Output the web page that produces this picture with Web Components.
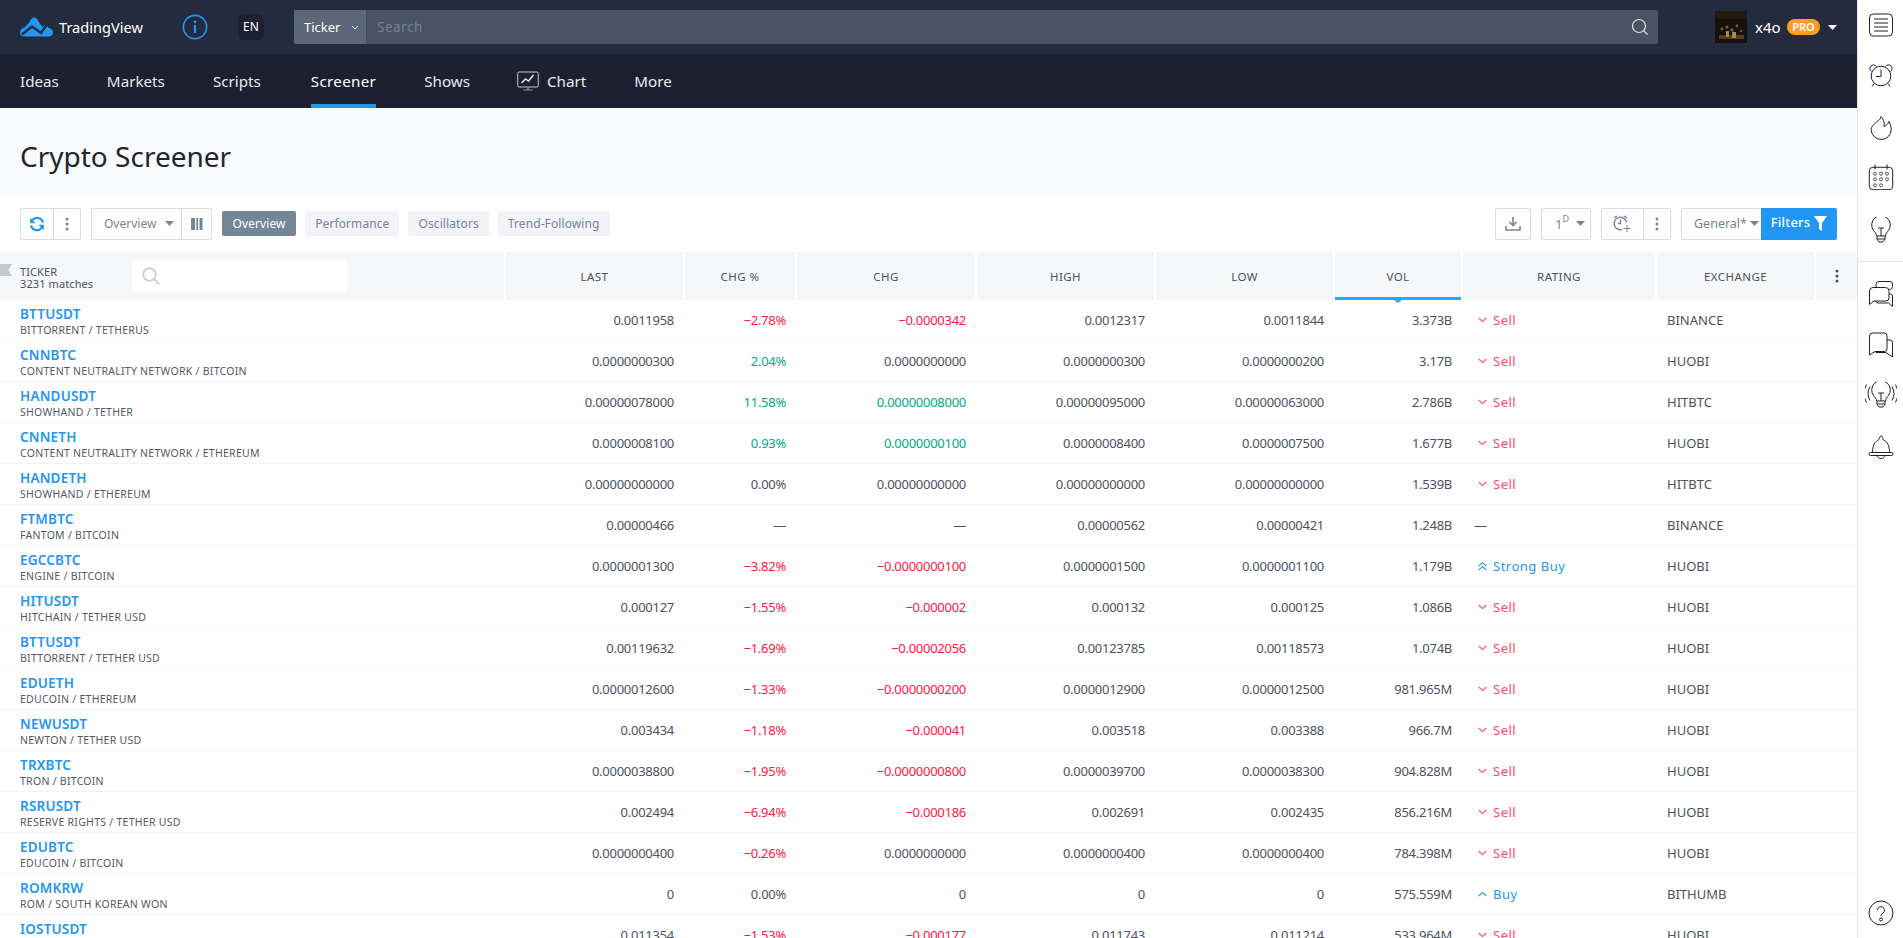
<!DOCTYPE html>
<html><head><meta charset="utf-8"><title>Crypto Screener</title>
<style>
html,body{margin:0;height:100%;overflow:hidden;background:#fff}
body{display:flex;font-family:"Noto Sans","Liberation Sans",sans-serif;font-size:13px;color:#4c525e}
tv-main{flex:1;min-width:0}
</style></head><body>
<tv-main>
  <tv-topbar></tv-topbar>
  <tv-nav></tv-nav>
  <tv-pagehead>Crypto Screener</tv-pagehead>
  <tv-toolbar></tv-toolbar>
  <tv-table></tv-table>
</tv-main>
<tv-sidebar></tv-sidebar>
<script>
function def(name,html,setup){
  customElements.define(name,class extends HTMLElement{
    constructor(){super();this.attachShadow({mode:'open'}).innerHTML=html;if(setup)setup(this.shadowRoot,this)}
  });
}
def('tv-main','<style>:host{display:block;height:100vh;overflow:hidden}</style><slot></slot>');
def('tv-topbar',`<style>
:host{display:flex;align-items:center;height:54px;background:#252b3e;color:#fff;box-sizing:border-box;padding-left:20px}
.logo{display:flex;align-items:center;gap:6px;width:142px;font-size:14.6px}
.info{width:26px;height:26px;margin:0 0 0 20px}
.lang{margin-left:30px;width:26px;height:26px;border-radius:5px;background:#1c2030;display:flex;align-items:center;justify-content:center;font-size:12px;box-sizing:border-box;padding-bottom:2px}
.search{margin-left:30px;width:1364px;height:34px;display:flex;border-radius:2px;overflow:hidden;background:#4a5364}
.ticker{width:73px;background:#5b6676;border-right:1px solid #424b5b;box-sizing:border-box;display:flex;align-items:center;padding-left:10px;font-size:13px;gap:11px}
.q{flex:1;display:flex;align-items:center;padding-left:10px;color:#78818f;font-size:13.5px;letter-spacing:.5px}
.mag{margin-right:9px;align-self:center}
.user{display:flex;align-items:center;margin-left:57px}
.ava{width:32px;height:32px;background:#15110c;overflow:hidden}
.name{margin-left:8px;font-size:15px;width:32px}
.pro{width:33px;height:16px;border-radius:8px;background:#ff9c27;font-size:11px;font-weight:600;text-align:center;line-height:16px}
.car{margin-left:8px}
</style>
<div class="logo"><svg width="33" height="20" viewBox="0 0 33 20"><path d="M0 15.500C0 12 3 10.500 5 10.500C6 8.500 7.500 7 9 6C10 3 12 .5 14 .5C16 .5 17.500 2.500 18.500 4.500C20 6.500 21 8.500 22.500 10C24 7.500 27 8 28 10.500C31 11 33 13 33 15.500C33 18 31 19.500 29 19.500L4 19.500C2 19.500 0 18 0 15.500Z" fill="#2196f3"/><path d="M2 17.500L12 9.500L21 16L26.500 8" fill="none" stroke="#252b3e" stroke-width="2.400"/></svg><span>TradingView</span></div>
<svg class="info" viewBox="0 0 26 26"><circle cx="13" cy="13" r="11.600" fill="none" stroke="#2196f3" stroke-width="1.600"/><rect x="11.900" y="11" width="2.200" height="8" fill="#2196f3"/><circle cx="13" cy="8" r="1.400" fill="#2196f3"/></svg>
<div class="lang">EN</div>
<div class="search"><div class="ticker"><span>Ticker</span><svg width="8" height="5" viewBox="0 0 8 5"><path d="M1 1l3 3 3-3" fill="none" stroke="#dfe3e8" stroke-width="1"/></svg></div>
<div class="q">Search</div>
<svg class="mag" width="18" height="18" viewBox="0 0 18 18"><circle cx="8" cy="8" r="6.500" fill="none" stroke="#dfe3e8" stroke-width="1.200"/><path d="M12.800 12.800L16.500 16.500" stroke="#dfe3e8" stroke-width="1.200"/></svg></div>
<div class="user"><svg class="ava" viewBox="0 0 32 32"><rect width="32" height="32" fill="#15110c"/><path d="M0 0h32v8H0z" fill="#221a10"/><g fill="#7a5a2c"><circle cx="7" cy="18" r="1.400"/><circle cx="12" cy="16" r="1.600"/><circle cx="17" cy="19" r="1.800"/><circle cx="22" cy="15" r="1.400"/><circle cx="26" cy="20" r="1.300"/></g><path d="M4 24h25v4H4z" fill="#5b3a1a"/><path d="M11 20h3v6h-3zM17 21h4v6h-4z" fill="#a88a50"/></svg>
<span class="name">x4o</span><span class="pro">PRO</span><svg class="car" width="9" height="5" viewBox="0 0 9 5"><path d="M0 0h9L4.500 5z" fill="#fff"/></svg></div>`);
def('tv-nav',`<style>
:host{display:flex;height:54px;background:#1c2030;color:#e8eaef;font-size:15.200px;padding-left:20px;gap:48px}
a{display:flex;align-items:center;gap:8px;height:54px;box-sizing:border-box}
.on{border-bottom:4px solid #2196f3;padding-top:4px;color:#fff;margin-left:2px;letter-spacing:.3px}
.c{margin-left:-1px}
</style><a>Ideas</a><a>Markets</a><a>Scripts</a><a class="on">Screener</a><a>Shows</a>
<a class="c"><svg width="22" height="20" viewBox="0 0 22 20"><rect x=".7" y="1" width="20.600" height="15" rx="1.500" fill="none" stroke="#c4c8d0" stroke-width="1"/><path d="M4.500 12l4-4 3 2 5-6" fill="none" stroke="#eceef2" stroke-width="1.400"/><path d="M11 16v2.500M6.500 19h9" stroke="#9aa0ab" stroke-width="1.200"/></svg>Chart</a><a>More</a>`);
def('tv-pagehead',`<style>:host{display:block;height:87px;background:#f9fafb;box-sizing:border-box;padding:25px 0 0 20px;font-size:28px;line-height:46px;color:#1f2430}</style><slot></slot>`);
const dots='<svg width="4" height="14" viewBox="0 0 4 14"><circle cx="2" cy="2" r="1.500"/><circle cx="2" cy="7" r="1.500"/><circle cx="2" cy="12" r="1.500"/></svg>';
const caret='<svg width="9" height="5" viewBox="0 0 9 5"><path d="M0 0h9L4.500 5z"/></svg>';
def('tv-toolbar',`<style>
:host{display:flex;align-items:center;height:57px;box-sizing:border-box;padding:0 20px;font-size:12px;color:#758696;fill:#758696}
.g{display:flex;height:32px;border:1px solid #dadde0;border-radius:2px;box-sizing:border-box;align-items:center}
.g>*{display:flex;align-items:center;justify-content:center;height:100%;box-sizing:border-box}
.g>*+*{border-left:1px solid #dadde0}
.tab{height:25px;display:flex;align-items:center;padding:0 10px;background:#f1f3f6;border-radius:2px;box-sizing:border-box;margin-left:9px;font-size:12px;letter-spacing:.1px}
.tab.on{background:#758696;color:#fff;margin-left:10px;padding:0 10.500px}
.sp{flex:1}
.f{background:#2196f3;color:#fff;fill:#fff;height:32px;width:76px;display:flex;align-items:center;justify-content:center;gap:4px;font-size:13px;font-weight:500;border-radius:0 2px 2px 0;letter-spacing:.2px}
.f span{margin-top:-3px}
sup{font-size:9px;line-height:0;position:relative;top:-1px;vertical-align:super}
.l{justify-content:flex-start!important;padding-left:12px}
</style>
<div class="g" style="width:61px"><div style="width:32px"><svg width="16" height="16" viewBox="0 0 16 16" fill="none" stroke="#2196f3" stroke-width="2.200"><path d="M14 6.500A6 6 0 0 0 3.400 4.200L2 6"/><path d="M2 9.500a6 6 0 0 0 10.600 2.300L14 10"/><path d="M1.200 2v5.300h5.300M14.800 14V8.700H9.500" stroke-width="0" fill="#2196f3"/></svg></div><div style="flex:1">${dots}</div></div>
<div class="g" style="width:121px;margin-left:10px"><div class="l" style="width:89px;gap:9px">Overview ${caret}</div><div style="flex:1"><svg width="12" height="12" viewBox="0 0 12 12"><path d="M0 0h4v12H0zM5.300 0h1.700v12H5.300zM8.500 0h3v12h-3z"/></svg></div></div>
<div class="tab on">Overview</div><div class="tab">Performance</div><div class="tab">Oscillators</div><div class="tab">Trend-Following</div>
<div class="sp"></div>
<div class="g" style="width:36px"><div style="flex:1"><svg width="16" height="14" viewBox="0 0 16 14" fill="none" stroke="#758696" stroke-width="1.600"><path d="M8 0v8M4.500 5L8 8.500 11.500 5M1 9v4h14V9"/></svg></div></div>
<div class="g" style="width:50px;margin-left:10px"><div class="l" style="flex:1;gap:7px;font-size:13px;padding-left:13px"><span>1<sup>D</sup></span>${caret}</div></div>
<div class="g" style="width:70px;margin-left:10px"><div style="width:41px"><svg width="19" height="18" viewBox="0 0 19 18" fill="none" stroke="#758696" stroke-width="1.400"><path d="M13.500 7.500A6.200 6.200 0 1 0 9 14.500"/><path d="M7.500 4.500v4H5M1 3l3-2M11 1l3 2"/><path d="M14 10v7M10.500 13.500h7" stroke-width="1"/></svg></div><div style="flex:1">${dots}</div></div>
<div class="g" style="width:80px;margin-left:10px;border-right:0;border-radius:2px 0 0 2px"><div class="l" style="flex:1;gap:3px;font-size:12.500px">General*${caret}</div></div>
<div class="f"><span>Filters</span><svg width="13" height="15" viewBox="0 0 13 15"><path d="M0 0h13L8 7v8l-3-2V7z"/></svg></div>`);

const rows=[
['BTTUSDT','BITTORRENT / TETHERUS','0.0011958','−2.78%','−0.0000342','0.0012317','0.0011844','3.373B','s','BINANCE','r'],
['CNNBTC','CONTENT NEUTRALITY NETWORK / BITCOIN','0.0000000300','2.04%','0.0000000000','0.0000000300','0.0000000200','3.17B','s','HUOBI','gn'],
['HANDUSDT','SHOWHAND / TETHER','0.00000078000','11.58%','0.00000008000','0.00000095000','0.00000063000','2.786B','s','HITBTC','g'],
['CNNETH','CONTENT NEUTRALITY NETWORK / ETHEREUM','0.0000008100','0.93%','0.0000000100','0.0000008400','0.0000007500','1.677B','s','HUOBI','g'],
['HANDETH','SHOWHAND / ETHEREUM','0.00000000000','0.00%','0.00000000000','0.00000000000','0.00000000000','1.539B','s','HITBTC','n'],
['FTMBTC','FANTOM / BITCOIN','0.00000466','—','—','0.00000562','0.00000421','1.248B','d','BINANCE','n'],
['EGCCBTC','ENGINE / BITCOIN','0.0000001300','−3.82%','−0.0000000100','0.0000001500','0.0000001100','1.179B','sb','HUOBI','r'],
['HITUSDT','HITCHAIN / TETHER USD','0.000127','−1.55%','−0.000002','0.000132','0.000125','1.086B','s','HUOBI','r'],
['BTTUSDT','BITTORRENT / TETHER USD','0.00119632','−1.69%','−0.00002056','0.00123785','0.00118573','1.074B','s','HUOBI','r'],
['EDUETH','EDUCOIN / ETHEREUM','0.0000012600','−1.33%','−0.0000000200','0.0000012900','0.0000012500','981.965M','s','HUOBI','r'],
['NEWUSDT','NEWTON / TETHER USD','0.003434','−1.18%','−0.000041','0.003518','0.003388','966.7M','s','HUOBI','r'],
['TRXBTC','TRON / BITCOIN','0.0000038800','−1.95%','−0.0000000800','0.0000039700','0.0000038300','904.828M','s','HUOBI','r'],
['RSRUSDT','RESERVE RIGHTS / TETHER USD','0.002494','−6.94%','−0.000186','0.002691','0.002435','856.216M','s','HUOBI','r'],
['EDUBTC','EDUCOIN / BITCOIN','0.0000000400','−0.26%','0.0000000000','0.0000000400','0.0000000400','784.398M','s','HUOBI','rn'],
['ROMKRW','ROM / SOUTH KOREAN WON','0','0.00%','0','0','0','575.559M','b','BITHUMB','n'],
['IOSTUSDT','','0.011354','−1.53%','−0.000177','0.011743','0.011214','533.964M','s','HUOBI','r'],
];
const COLS='506px 179px 112px 180px 179px 179px 128px 194px 159px 41px';
def('tv-th',`<style>
:host{display:flex;align-items:center;justify-content:center;background:#f6f7f9;margin-right:2px;font-size:11.500px;letter-spacing:.45px;color:#4c525e;position:relative;box-sizing:border-box}
:host([sel]){border-bottom:3px solid #36a3f0;padding-top:3px}
:host(:last-child){margin-right:0}
.tip{display:none;position:absolute;bottom:-6px;left:50%;margin-left:-4px;width:0;height:0;border:4px solid transparent;border-bottom:0;border-top:3px solid #36a3f0}
:host([sel]) .tip{display:block}
</style><slot></slot><i class="tip"></i>`);
def('tv-row',`<style>
:host{display:grid;grid-template-columns:${COLS};height:41px;box-sizing:border-box;border-bottom:1px solid #f1f3fa;align-items:center;font-size:13px;color:#4c525e}
.t{padding-left:20px;line-height:14px;margin-top:4px}
.sym{color:#2196f3;font-weight:600;font-size:13.500px;line-height:17px;letter-spacing:.2px}
.sub{font-size:10.500px;line-height:15px;height:15px;color:#535965;letter-spacing:.27px}
.n{text-align:right;padding-right:11px;letter-spacing:-.27px}
.r{color:#ff1744}.g{color:#00a97f}
.rat{display:flex;align-items:center;gap:6px;padding-left:15px;letter-spacing:.5px}
.s{color:#ff4a68}.b{color:#2196f3}
.ex{padding-left:10px}
</style><div class="t"><div class="sym"></div><div class="sub"></div></div>
<div class="n c2"></div><div class="n c3"></div><div class="n c4"></div><div class="n c5"></div><div class="n c6"></div><div class="n c7"></div><div class="rat"></div><div class="ex"></div>`);
const chev={
 s:'<svg width="9" height="6" viewBox="0 0 9 6"><path d="M.7 1l3.800 3.600L8.300 1" fill="none" stroke="#ff4a68" stroke-width="1.100"/></svg>',
 b:'<svg width="9" height="6" viewBox="0 0 9 6"><path d="M.7 5l3.800-3.600L8.300 5" fill="none" stroke="#2196f3" stroke-width="1.100"/></svg>',
 sb:'<svg width="9" height="9" viewBox="0 0 9 9"><path d="M.7 4l3.800-3.300L8.300 4M.7 8l3.800-3.300L8.300 8" fill="none" stroke="#2196f3" stroke-width="1.100"/></svg>'};
def('tv-table',`<style>
:host{display:block}
.h{display:grid;grid-template-columns:${COLS};height:48px}
.tick{justify-content:flex-start}
.f{position:absolute;left:0;top:12px;width:12px;height:12px;background:#c5c8cf;clip-path:polygon(0 0,100% 0,70% 50%,100% 100%,0 100%)}
.lab{padding:4px 0 0 20px;font-size:11px;line-height:12px;letter-spacing:.1px;width:132px;box-sizing:border-box;color:#4c525e}
.box{width:215px;height:32px;background:#fff;border-radius:2px;display:flex;align-items:center;padding-left:10px;box-sizing:border-box}
</style>
<div class="h">
<tv-th class="tick"><i class="f"></i><div class="lab">TICKER<br>3231 matches</div><div class="box"><svg width="18" height="18" viewBox="0 0 18 18" fill="none" stroke="#cfd1d4" stroke-width="2"><circle cx="7.500" cy="7.500" r="6.300"/><path d="M12 12L17 17"/></svg></div></tv-th>
<tv-th>LAST</tv-th><tv-th>CHG %</tv-th><tv-th>CHG</tv-th><tv-th>HIGH</tv-th><tv-th>LOW</tv-th><tv-th sel>VOL</tv-th><tv-th>RATING</tv-th><tv-th>EXCHANGE</tv-th><tv-th style="fill:#4c525e">${dots}</tv-th>
</div><div class="b"></div>`,(sr)=>{
 const tpl=sr.querySelector('.b');
 for(const r of rows){
  const el=document.createElement('tv-row');
  const s=el.shadowRoot;
  s.querySelector('.sym').textContent=r[0];
  s.querySelector('.sub').textContent=r[1];
  for(let i=0;i<6;i++) s.querySelector('.c'+(i+2)).textContent=r[i+2];
  const cl=r[10];
  s.querySelector('.c3').className+=' '+(cl[0]=='r'?'r':cl[0]=='g'?'g':'');
  if(cl=='r'||cl=='g') s.querySelector('.c4').className+=' '+cl;
  const rat=s.querySelector('.rat'),k=r[8];
  if(k=='d'){rat.textContent='—';rat.style.paddingLeft='11px'}
  else{
   rat.className+=' '+(k=='s'?'s':'b');
   rat.innerHTML=chev[k]+'<span>'+(k=='s'?'Sell':k=='b'?'Buy':'Strong Buy')+'</span>';
  }
  s.querySelector('.ex').textContent=r[9];
  tpl.appendChild(el);
 }
});
const ic=(b,w=26)=>`<svg width="${w}" height="26" viewBox="0 0 ${w} 26" fill="none" stroke="#1e222d" stroke-width="1">${b}</svg>`;
const bulb='M8.500 19c0-2.300-1.500-3.500-3-5.500a9.300 9.300 0 1 1 15 0c-1.500 2-3 3.200-3 5.500zM9 19v3.500c0 .5 1 1 1 1l1 1.500h4l1-1.500s1-.5 1-1V19M13 19v-8M10 11h6M9 22h8';
def('tv-sidebar',`<style>
:host{display:block;width:46px;box-sizing:border-box;border-left:1px solid #e0e3eb;height:100vh;background:#fff;position:relative;flex:none}
.i{display:flex;align-items:center;justify-content:center;height:50px}
.top{height:262px;border-bottom:1px solid #e0e3eb;box-sizing:border-box}
.help{position:absolute;top:900px;left:0;right:0;display:flex;justify-content:center}
</style>
<div class="top">
<div class="i">${ic('<rect x="1.500" y="2" width="23" height="22" rx="4"/><path d="M6 7h14M6 11h14M6 15h14M6 19h14"/>')}</div>
<div class="i">${ic('<circle cx="13" cy="14" r="9.800"/><path d="M13 7.500V14.500H8M3.500 9.500a3.600 3.600 0 1 1 5-5M22.500 9.500a3.600 3.600 0 1 0-5-5M6 21.500l-2 3M20 21.500l2 3"/>')}</div>
<div class="i" style="height:56px">${ic('<path d="M13 1.500c.5 4-9.800 7-9.800 13a10 10 0 0 0 20 0c0-3-1-6-2.200-8-.5 2-2.500 4-5 5 1-4-1-8-3-10z"/>')}</div>
<div class="i" style="height:42px">${ic('<rect x="1.300" y="3.300" width="23.400" height="22.400" rx="3.500"/><path d="M7 .5v5M19 .5v5"/><g stroke="#4c525e"><circle cx="7" cy="9.700" r="1.500"/><circle cx="13" cy="9.700" r="1.500"/><circle cx="19" cy="9.700" r="1.500"/><circle cx="7" cy="15.300" r="1.500"/><circle cx="13" cy="15.300" r="1.500"/><circle cx="19" cy="15.300" r="1.500"/><circle cx="7" cy="21.300" r="1.500"/><circle cx="13" cy="21.300" r="1.500"/></g>')}</div>
<div class="i" style="height:63px">${ic('<path d="'+bulb+'"/>')}</div>
</div>
<div class="i" style="height:64px">${ic('<path d="M1.500 23.500V10A3.500 3.500 0 0 1 5 6.500h12.500A3.500 3.500 0 0 1 21 10v7a3 3 0 0 1-3 3H6zM8 6.500v-3a3 3 0 0 1 3-3h11A2.500 2.500 0 0 1 24.500 3v2.500a3 3 0 0 1-3 3M21 13h1.500a2 2 0 0 1 2 2v10.500l-4-3.500H10a2 2 0 0 1-2-2"/>')}</div>
<div class="i" style="height:38px">${ic('<path d="M1.500 23V4a3 3 0 0 1 3-3H16a3 3 0 0 1 3 3v13a2.500 2.500 0 0 1-2.500 2.500H7zM19 8h3a2.500 2.500 0 0 1 2.500 2.500V25L18 20.500H9a2.500 2.500 0 0 1-2-1"/>')}</div>
<div class="i" style="height:62px">${ic('<g transform="translate(3 0)"><path d="'+bulb+'"/></g><path d="M5 4.500a14 14 0 0 0 0 14M1.500 2.500a19 19 0 0 0 0 18M27 4.500a14 14 0 0 1 0 14M30.500 2.500a19 19 0 0 1 0 18"/>',32)}</div>
<div class="i" style="height:44px">${ic('<path d="M4.500 17.500c0-3 .5-6 1.500-8 1-2.500 3.500-4 5-5 .5-.8.5-3.500 2-3.500s1.500 2.700 2 3.500c1.500 1 4 2.500 5 5 1 2 1.500 5 1.500 8M2.500 17.500h21a1.200 1.200 0 0 1 0 3h-21a1.200 1.200 0 0 1 0-3zM9 20.500c.5 1.800 2 3 4 3s3.500-1.200 4-3"/>')}</div>
<div class="help"><svg width="26" height="26" viewBox="0 0 26 26" fill="none" stroke="#1e222d" stroke-width="1"><circle cx="13" cy="13" r="12"/><path d="M9.500 10a3.500 3.500 0 1 1 5.500 3c-1.500 1-2 1.500-2 3"/><circle cx="13" cy="19.500" r="1.500"/></svg></div>`);
</script>
</body></html>
